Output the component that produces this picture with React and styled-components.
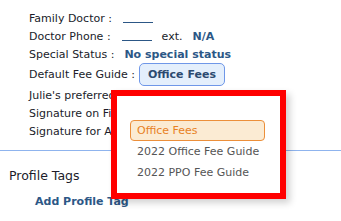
import { createGlobalStyle, styled } from "styled-components";

const GlobalStyle = createGlobalStyle`
    html, body {
        margin: 0;
        padding: 0;
        background: #ffffff;
    }
    body {
        font-family: "DejaVu Sans", Verdana, sans-serif;
        font-size: 11px;
        color: #262230;
    }
`;

const feeGuides = ["Office Fees", "2022 Office Fee Guide", "2022 PPO Fee Guide"];

export default function App() {
    return (
        <>
            <GlobalStyle />
            <Page>
                <InfoList>
                    <Row>
                        <Label>Family Doctor :</Label>
                        <Blank />
                    </Row>
                    <Row>
                        <Label>Doctor Phone :</Label>
                        <Blank />
                        <Label>ext.</Label>
                        <Value>N/A</Value>
                    </Row>
                    <Row>
                        <Label>Special Status :</Label>
                        <Value>No special status</Value>
                    </Row>
                    <Row $tall>
                        <Label>Default Fee Guide :</Label>
                        <FeeButton>Office Fees</FeeButton>
                    </Row>
                    <Row>
                        <Label>Julie's preferred contact method :</Label>
                    </Row>
                    <Row>
                        <Label>Signature on File :</Label>
                    </Row>
                    <Row>
                        <Label>Signature for Assignment :</Label>
                    </Row>
                </InfoList>

                <Divider />

                <Section>
                    <SectionTitle>Profile Tags</SectionTitle>
                    <AddLink>Add Profile Tag</AddLink>
                </Section>

                {/* fee guide dropdown, open over the form */}
                <Popup>
                    <OptionList>
                        {feeGuides.map((name, i) => (
                            <Option key={name} $selected={i === 0}>{name}</Option>
                        ))}
                    </OptionList>
                </Popup>
            </Page>
        </>
    );
}

const Page = styled.div`
    position: relative;
    width: 341px;
    height: 221px;
    overflow: hidden;
`;

const InfoList = styled.div`
    display: flex;
    flex-direction: column;
    padding: 9px 0 0 29px;
    white-space: nowrap;
`;

const Row = styled.div`
    display: flex;
    align-items: center;
    gap: 10px;
    height: ${(props) => props.$tall ? '23px' : '18px'};
`;

const Label = styled.span`
    color: #201c2a;
`;

const Value = styled.span`
    color: #2c5786;
    font-weight: bold;
`;

const Blank = styled.span`
    display: inline-block;
    width: 30px;
    height: 1px;
    margin-left: 1px;
    background-color: #2c5786;
    margin-top: 8px;
`;

const FeeButton = styled.button`
    height: 23px;
    width: 86px;
    padding: 0;
    margin-left: -6px;
    font-family: inherit;
    font-size: 11px;
    font-weight: bold;
    color: #2c4a70;
    background-color: #e4effc;
    border: 1px solid #6f97e8;
    border-radius: 5px;
`;

const Divider = styled.hr`
    margin: 10px 0 0 0;
    border: none;
    height: 1px;
    background-color: #8fb4ee;
`;

const Section = styled.div`
    display: flex;
    flex-direction: column;
    padding: 17px 0 0 9px;
`;

const SectionTitle = styled.div`
    font-size: 12.5px;
    color: #201c2a;
`;

const AddLink = styled.div`
    margin: 12px 0 0 26px;
    font-weight: bold;
    color: #2c5786;
`;

const Popup = styled.div`
    position: absolute;
    left: 111px;
    top: 90px;
    width: 175px;
    height: 109px;
    box-sizing: border-box;
    border: 6px solid #ff0000;
    background-color: #ffffff;
    box-shadow: 4px 4px 7px rgba(0, 0, 0, 0.18);
    padding: 24px 0 0 13px;
`;

const OptionList = styled.div`
    display: flex;
    flex-direction: column;
    width: 135px;
`;

const Option = styled.div`
    height: 21px;
    box-sizing: border-box;
    display: flex;
    align-items: center;
    padding-left: 6px;
    font-size: 11px;
    white-space: nowrap;
    color: ${(props) => props.$selected ? '#e8811f' : '#555555'};
    background-color: ${(props) => props.$selected ? '#fbebd3' : 'transparent'};
    border: 1px solid ${(props) => props.$selected ? '#ec8f3a' : 'transparent'};
    border-radius: 4px;
`;
